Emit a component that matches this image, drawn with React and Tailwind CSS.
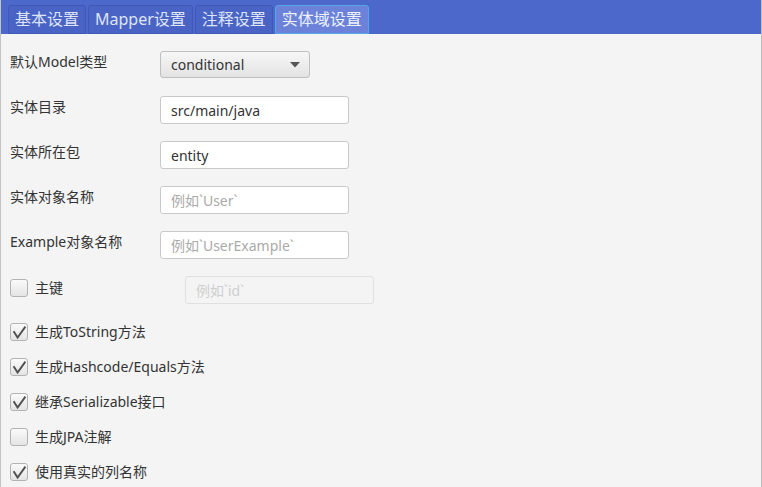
import React from "react";

const font = { fontFamily: '"Noto Sans", "Noto Sans CJK SC", sans-serif' };

function Tab({ label, active }) {
  return (
    <div
      className={
        "h-[29px] px-[6px] flex items-center rounded-t-[3px] border text-[16px] leading-none " +
        (active
          ? "bg-[#6b82d8] border-[#52a9e6] text-[#eef2ff]"
          : "bg-[#4a64c6] border-[#3f57b6] text-[#dfe5f7]")
      }
    >
      <span className="-mt-[1px]">{label}</span>
    </div>
  );
}

function Check({ checked }) {
  return (
    <div className="w-[18px] h-[18px] shrink-0 rounded-[3px] border border-[#b3b3b3] bg-gradient-to-b from-[#fafafa] to-[#e4e4e4] relative">
      {checked && (
        <svg className="absolute -left-[1px] -top-[1px]" width="18" height="18" viewBox="0 0 18 18">
          <path d="M3.6 8.2 L7.6 14.6 L15.4 3.6" fill="none" stroke="#505050" strokeWidth="1.9" strokeLinejoin="miter" />
        </svg>
      )}
    </div>
  );
}

function FieldRow({ label, children }) {
  return (
    <div className="h-[45px] flex items-start">
      <div className="w-[150px] h-[28px] flex items-center pb-[8px] text-[14px] text-[#333]">{label}</div>
      {children}
    </div>
  );
}

function Input({ value, placeholder, disabled, className = "" }) {
  return (
    <div
      className={
        "h-[28px] w-[189px] rounded-[3px] border flex items-center px-[10px] text-[14px] " +
        (disabled
          ? "border-[#e0e0e0] bg-[#f4f4f4] text-[#cfcfcf]"
          : "border-[#c9c9c9] bg-white " + (value ? "text-[#333]" : "text-[#aaa]")) +
        " " +
        className
      }
    >
      {value || placeholder}
    </div>
  );
}

function CheckRow({ label, checked }) {
  return (
    <div className="h-[35px] flex items-start">
      <div className="flex items-center gap-[7px] text-[14px] text-[#333]">
        <Check checked={checked} />
        <span>{label}</span>
      </div>
    </div>
  );
}

export default function App() {
  return (
    <div className="w-[762px] h-[487px] overflow-hidden bg-[#f4f4f4] border-l border-l-[#c4c4c4] border-r border-r-[#bdbdbd] flex flex-col" style={font}>
      <div className="h-[34px] bg-[#4c68ca] flex items-end pl-[7px] gap-[2px] shrink-0">
        <Tab label="基本设置" />
        <Tab label="Mapper设置" />
        <Tab label="注释设置" />
        <Tab label="实体域设置" active />
      </div>
      <div className="pl-[9px] pt-[17px] flex flex-col">
        <FieldRow label="默认Model类型">
          <div className="h-[27px] w-[150px] rounded-[3px] border border-[#bfbfbf] bg-gradient-to-b from-[#f7f7f7] to-[#e3e3e3] flex items-center justify-between pl-[10px] pr-[9px] text-[14px] text-[#333]">
            <span>conditional</span>
            <svg width="10" height="6" viewBox="0 0 10 6">
              <path d="M0 0 H10 L5 5.5 Z" fill="#555" />
            </svg>
          </div>
        </FieldRow>
        <FieldRow label="实体目录">
          <Input value="src/main/java" />
        </FieldRow>
        <FieldRow label="实体所在包">
          <Input value="entity" />
        </FieldRow>
        <FieldRow label="实体对象名称">
          <Input placeholder="例如`User`" />
        </FieldRow>
        <FieldRow label="Example对象名称">
          <Input placeholder="例如`UserExample`" />
        </FieldRow>
        <div className="h-[45px] flex items-start">
          <div className="w-[175px] pt-[1px] flex items-center gap-[7px] text-[14px] text-[#333]">
            <Check />
            <span>主键</span>
          </div>
          <Input placeholder="例如`id`" disabled />
        </div>
        <CheckRow label="生成ToString方法" checked />
        <CheckRow label="生成Hashcode/Equals方法" checked />
        <CheckRow label="继承Serializable接口" checked />
        <CheckRow label="生成JPA注解" />
        <CheckRow label="使用真实的列名称" checked />
      </div>
    </div>
  );
}
